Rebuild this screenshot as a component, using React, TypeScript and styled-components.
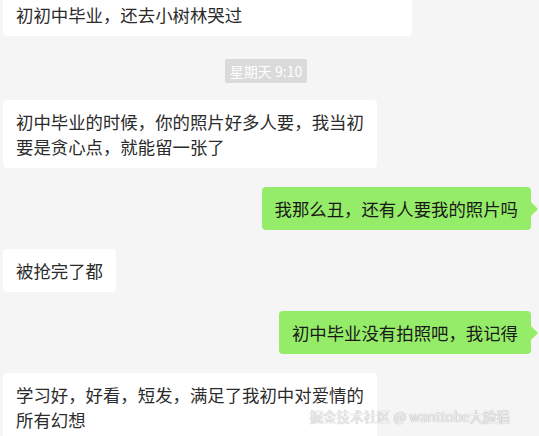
import React from 'react';
import styled, { createGlobalStyle } from 'styled-components';

const GlobalStyle = createGlobalStyle`
  html, body {
    margin: 0;
    padding: 0;
    background: #f5f5f5;
    overflow: hidden;
  }
`;

const Page = styled.div`
  position: relative;
  width: 539px;
  height: 436px;
  overflow: hidden;
  background: #f5f5f5;
  font-family: "Noto Sans CJK SC", "Microsoft YaHei", sans-serif;
`;

const List = styled.div`
  display: flex;
  flex-direction: column;
  gap: 19px;
  margin-top: -32px;
`;

const Row = styled.div<{ mine?: boolean }>`
  display: flex;
  justify-content: ${(p) => (p.mine ? 'flex-end' : 'flex-start')};
  padding: ${(p) => (p.mine ? '0 8px 0 0' : '0 0 0 3px')};
`;

const Bubble = styled.div<{ mine?: boolean }>`
  position: relative;
  padding: 9px 13px;
  border-radius: 4px;
  background: ${(p) => (p.mine ? '#95ec69' : '#ffffff')};
  color: ${(p) => (p.mine ? '#191919' : '#2b2b2b')};
  font-size: 17.4px;
  line-height: 25px;
  white-space: pre-line;

  ${(p) =>
    p.mine &&
    `
    &::after {
      content: '';
      position: absolute;
      right: -7px;
      top: 50%;
      margin-top: -7px;
      border-top: 7px solid transparent;
      border-bottom: 7px solid transparent;
      border-left: 7px solid #95ec69;
    }
  `}
`;

const TimeRow = styled.div`
  display: flex;
  justify-content: center;
  padding-right: 7px;
  margin: 4px 0 -2px;
`;

const TimeTag = styled.span`
  background: #dadada;
  color: #ffffff;
  font-size: 14px;
  line-height: 24px;
  padding: 0 5px;
  border-radius: 2px;
`;

const Watermark = styled.div`
  position: absolute;
  right: 29px;
  bottom: 10px;
  font-size: 13.5px;
  color: #f2f2f2;
  text-shadow: 0 0 1px rgba(0, 0, 0, 0.45);
  font-family: "Noto Sans CJK SC", "Liberation Sans", sans-serif;
`;

type Msg = { mine?: boolean; text: string } | { time: string };

const messages: Msg[] = [
  { text: '初初中毕业的时候喜欢一个女孩子，我们班的，当\n初初中毕业，还去小树林哭过' },
  { time: '星期天 9:10' },
  { text: '初中毕业的时候，你的照片好多人要，我当初\n要是贪心点，就能留一张了' },
  { mine: true, text: '我那么丑，还有人要我的照片吗' },
  { text: '被抢完了都' },
  { mine: true, text: '初中毕业没有拍照吧，我记得' },
  { text: '学习好，好看，短发，满足了我初中对爱情的\n所有幻想' },
];

export default function App() {
  return (
    <Page>
      <GlobalStyle />
      <List>
        {messages.map((m, i) =>
          'time' in m ? (
            <TimeRow key={i}>
              <TimeTag>{m.time}</TimeTag>
            </TimeRow>
          ) : (
            <Row key={i} mine={m.mine}>
              <Bubble mine={m.mine}>{m.text}</Bubble>
            </Row>
          )
        )}
      </List>
      <Watermark>掘金技术社区 @ wanttobe大脸猫</Watermark>
    </Page>
  );
}
